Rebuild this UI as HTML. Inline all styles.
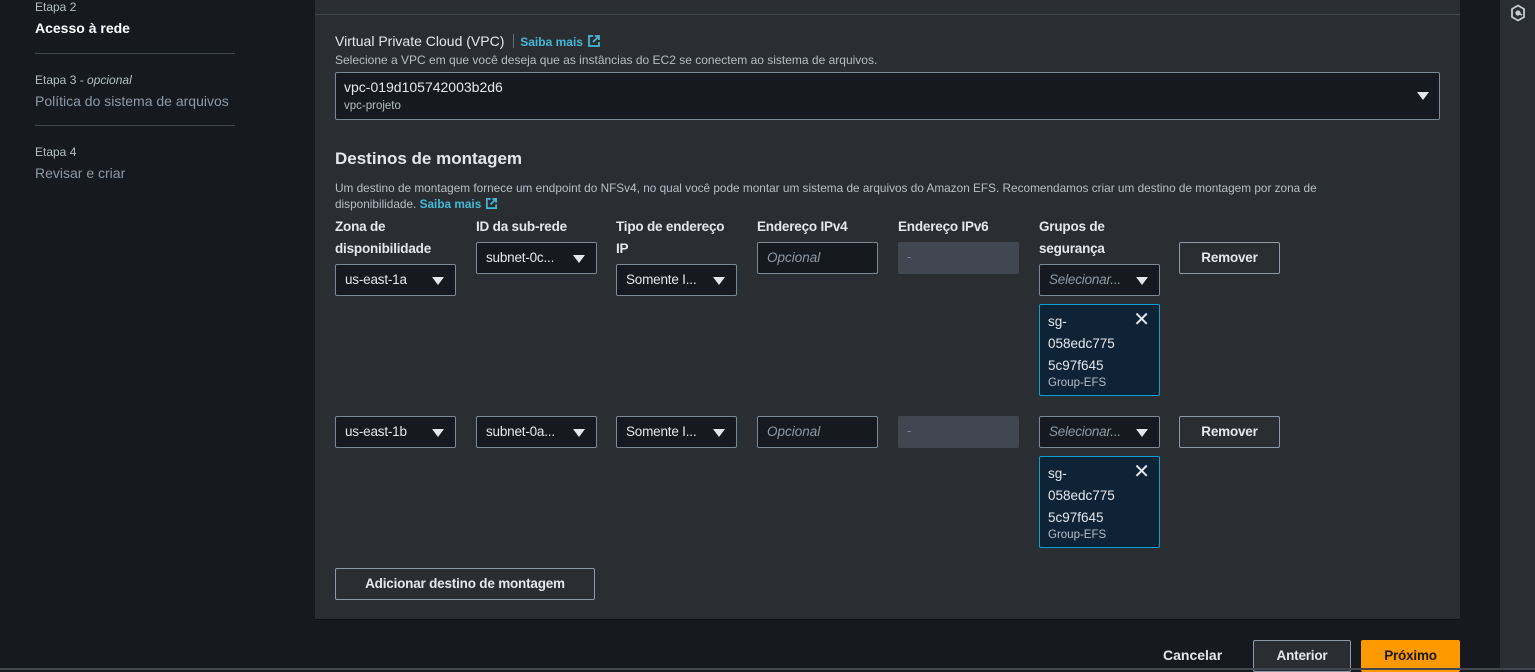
<!DOCTYPE html>
<html><head><meta charset="utf-8"><style>
*{box-sizing:border-box;margin:0;padding:0}
body{width:1535px;height:670px;overflow:hidden;background:#161a20;font-family:"Liberation Sans",sans-serif;color:#d1d5db;position:relative}
.a{position:absolute;white-space:nowrap}
.side{left:35px}
.sm{font-size:12px;color:#b6bec9}
.hr{position:absolute;left:35px;width:200px;height:1px;background:#414750}
.panel{position:absolute;left:315px;top:-5px;width:1145px;height:625px;background:#2a2e33;border-bottom:1px solid #0c0f13}
.lbl{font-size:13.5px;font-weight:bold;color:#e4e7eb;line-height:22px;letter-spacing:-0.2px}
.sel{position:absolute;width:121px;height:32px;background:#161a20;border:1px solid #7d8998;border-radius:2px;font-size:13.5px;color:#e4e7eb;padding:7px 9px;white-space:nowrap;letter-spacing:-0.2px}
.sel:after{content:"";position:absolute;right:11px;top:12px;border-left:6px solid transparent;border-right:6px solid transparent;border-top:8px solid #e4e7eb}
.it{font-style:italic;color:#8d99a8}
.inp{position:absolute;width:121px;height:32px;background:#161a20;border:1px solid #7d8998;border-radius:2px;font-size:13.5px;font-style:italic;color:#8d99a8;padding:7px 9px}
.dis{position:absolute;width:121px;height:32px;background:#414750;border-radius:2px;color:#7d8998;font-size:13px;padding:7px 9px}
.btn{position:absolute;border:1px solid #8d99a8;border-radius:2px;font-size:13.5px;font-weight:bold;color:#e4e7eb;text-align:center;letter-spacing:-0.2px}
.tok{position:absolute;width:121px;height:92px;background:#0f2336;border:1px solid #0aa0d6;border-radius:2px;padding:6px 8px;font-size:13.5px;color:#e4e7eb;line-height:22px}
.tok small{display:block;font-size:11.5px;color:#b6bec9;line-height:14px;margin-top:-1px}
.tok b{position:absolute;right:9px;top:4px;font-weight:normal;font-size:20px;color:#e4e7eb}
.link{color:#44b9d6;font-weight:bold}
</style></head><body>
<div class="a side sm" style="top:0">Etapa 2</div>
<div class="a side" style="top:20px;font-size:14px;font-weight:bold;color:#fff">Acesso à rede</div>
<div class="hr" style="top:53px"></div>
<div class="a side sm" style="top:73px">Etapa 3 - <i>opcional</i></div>
<div class="a side" style="top:93px;font-size:14px;color:#8d99a8">Política do sistema de arquivos</div>
<div class="hr" style="top:125px"></div>
<div class="a side sm" style="top:145px">Etapa 4</div>
<div class="a side" style="top:165px;font-size:14px;color:#8d99a8">Revisar e criar</div>

<div class="panel"></div>
<div class="a" style="left:315px;top:14px;width:1145px;height:1px;background:#414750"></div>
<div class="a" style="left:1460px;top:0;width:40px;height:670px;background:#161a20"></div>
<div class="a" style="left:1500px;top:0;width:35px;height:670px;background:#2a2e33"></div>
<svg class="a" style="left:1510px;top:4px" width="16" height="18" viewBox="0 0 16 18"><path d="M8 1.5l6 3.5v8l-6 3.5-6-3.5v-8z" fill="none" stroke="#c6ccd4" stroke-width="1.8"/><circle cx="8" cy="9" r="2.6" fill="#c6ccd4"/><path d="M8 9l4 2" stroke="#c6ccd4" stroke-width="1.6"/></svg>

<div class="a" style="left:335px;top:33px;font-size:14px;color:#e4e7eb">Virtual Private Cloud (VPC) <span style="display:inline-block;width:1px;height:14px;background:#5f6b7a;margin:0 6px -2px 5px"></span><span class="link" style="font-size:12px">Saiba mais</span> <svg width="14" height="14" viewBox="0 0 14 14" style="vertical-align:-2px"><path d="M6 2H2v10h10V8M8 2h4v4M12 2L6 8" fill="none" stroke="#44b9d6" stroke-width="1.8"/></svg></div>
<div class="a" style="left:335px;top:53px;font-size:12px;color:#b6bec9">Selecione a VPC em que você deseja que as instâncias do EC2 se conectem ao sistema de arquivos.</div>
<div class="a" style="left:335px;top:72px;width:1105px;height:48px;background:#161a20;border:1px solid #7d8998;border-radius:2px"></div>
<div class="a" style="left:344px;top:79px;font-size:14px;color:#e4e7eb">vpc-019d105742003b2d6</div>
<div class="a" style="left:344px;top:100px;font-size:11.5px;color:#b6bec9">vpc-projeto</div>
<div class="a" style="left:1417px;top:92px;border-left:6px solid transparent;border-right:6px solid transparent;border-top:8px solid #e4e7eb"></div>

<div class="a" style="left:335px;top:149px;font-size:17px;font-weight:bold;color:#e4e7eb">Destinos de montagem</div>
<div class="a" style="left:335px;top:180px;font-size:11.8px;color:#b6bec9;line-height:16px">Um destino de montagem fornece um endpoint do NFSv4, no qual você pode montar um sistema de arquivos do Amazon EFS. Recomendamos criar um destino de montagem por zona de<br>disponibilidade. <span class="link">Saiba mais</span> <svg width="13" height="13" viewBox="0 0 14 14" style="vertical-align:-2px"><path d="M6 2H2v10h10V8M8 2h4v4M12 2L6 8" fill="none" stroke="#44b9d6" stroke-width="1.8"/></svg></div>

<div class="a lbl" style="left:335px;top:216px">Zona de<br>disponibilidade</div>
<div class="a lbl" style="left:476px;top:216px">ID da sub-rede</div>
<div class="a lbl" style="left:616px;top:216px">Tipo de endereço<br>IP</div>
<div class="a lbl" style="left:757px;top:216px">Endereço IPv4</div>
<div class="a lbl" style="left:898px;top:216px">Endereço IPv6</div>
<div class="a lbl" style="left:1039px;top:216px">Grupos de<br>segurança</div>

<div class="sel" style="left:335px;top:264px">us-east-1a</div>
<div class="sel" style="left:476px;top:242px">subnet-0c...</div>
<div class="sel" style="left:616px;top:264px">Somente I...</div>
<div class="inp" style="left:757px;top:242px">Opcional</div>
<div class="dis" style="left:898px;top:242px">-</div>
<div class="sel" style="left:1039px;top:264px"><span class="it">Selecionar...</span></div>
<div class="btn" style="left:1179px;top:242px;width:101px;height:32px;line-height:30px">Remover</div>
<div class="tok" style="left:1039px;top:304px">sg-<br>058edc775<br>5c97f645<small>Group-EFS</small><b>✕</b></div>

<div class="sel" style="left:335px;top:416px">us-east-1b</div>
<div class="sel" style="left:476px;top:416px">subnet-0a...</div>
<div class="sel" style="left:616px;top:416px">Somente I...</div>
<div class="inp" style="left:757px;top:416px">Opcional</div>
<div class="dis" style="left:898px;top:416px">-</div>
<div class="sel" style="left:1039px;top:416px"><span class="it">Selecionar...</span></div>
<div class="btn" style="left:1179px;top:416px;width:101px;height:32px;line-height:30px">Remover</div>
<div class="tok" style="left:1039px;top:456px">sg-<br>058edc775<br>5c97f645<small>Group-EFS</small><b>✕</b></div>

<div class="btn" style="left:335px;top:568px;width:260px;height:32px;line-height:30px">Adicionar destino de montagem</div>

<div class="a" style="left:1163px;top:647px;font-size:14px;font-weight:bold;color:#e4e7eb">Cancelar</div>
<div class="btn" style="left:1253px;top:640px;width:98px;height:32px;line-height:30px;background:#2a2e33">Anterior</div>
<div class="btn" style="left:1361px;top:640px;width:99px;height:32px;line-height:30px;background:#ff9900;border-color:#ff9900;color:#161a20">Próximo</div>
<div class="a" style="left:0;top:668px;width:1535px;height:2px;background:#414750"></div>
</body></html>
